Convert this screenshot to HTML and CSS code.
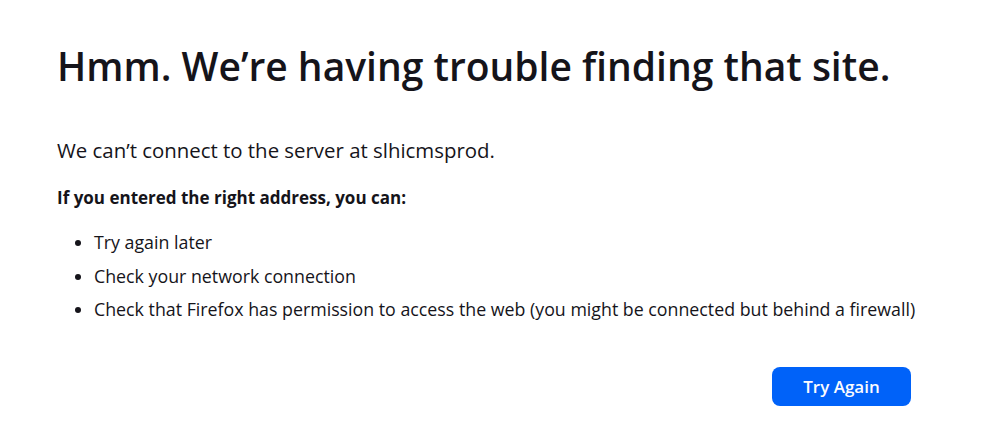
FILE: index.html
```html
<!DOCTYPE html>
<html lang="en">
<head>
<meta charset="utf-8">
<title>Problem loading page</title>
<link rel="stylesheet" href="styles.css">
</head>
<body>
<main class="container">
  <h1 class="title">Hmm. We’re having trouble finding that site.</h1>
  <p class="short-desc">We can’t connect to the server at slhicmsprod.</p>
  <p class="lead">If you entered the right address, you can:</p>
  <ul class="tips">
    <li>Try again later</li>
    <li>Check your network connection</li>
    <li>Check that Firefox has permission to access the web (you might be connected but behind a firewall)</li>
  </ul>
  <div class="actions">
    <button class="primary">Try Again</button>
  </div>
</main>
</body>
</html>
```
FILE: styles.css
```css
html, body {
  margin: 0;
  padding: 0;
  background: #ffffff;
}
body {
  font-family: "Open Sans", "Noto Sans", sans-serif;
  color: #15141a;
}
.container {
  width: 854px;
  padding: 38px 0 0 57px;
}
.title {
  margin: 0;
  font-size: 39px;
  font-weight: 600;
  line-height: 56px;
  letter-spacing: 0;
}
.short-desc {
  margin: 41px 0 0;
  font-size: 20.4px;
  line-height: 30px;
}
.lead {
  margin: 21px 0 0;
  font-size: 17px;
  font-weight: 700;
  line-height: 24px;
}
.tips {
  margin: 20px 0 0;
  padding: 0 0 0 37px;
  font-size: 17.8px;
  line-height: 24px;
  white-space: nowrap;
}
.tips li {
  margin-bottom: 9.5px;
}
.actions {
  display: flex;
  justify-content: flex-end;
  margin-top: 46px;
}
.primary {
  font-family: inherit;
  font-size: 17px;
  font-weight: 600;
  color: #fbfbfe;
  background: #0062f9;
  border: none;
  border-radius: 8px;
  width: 139px;
  height: 39px;
  padding: 0;
}
```
